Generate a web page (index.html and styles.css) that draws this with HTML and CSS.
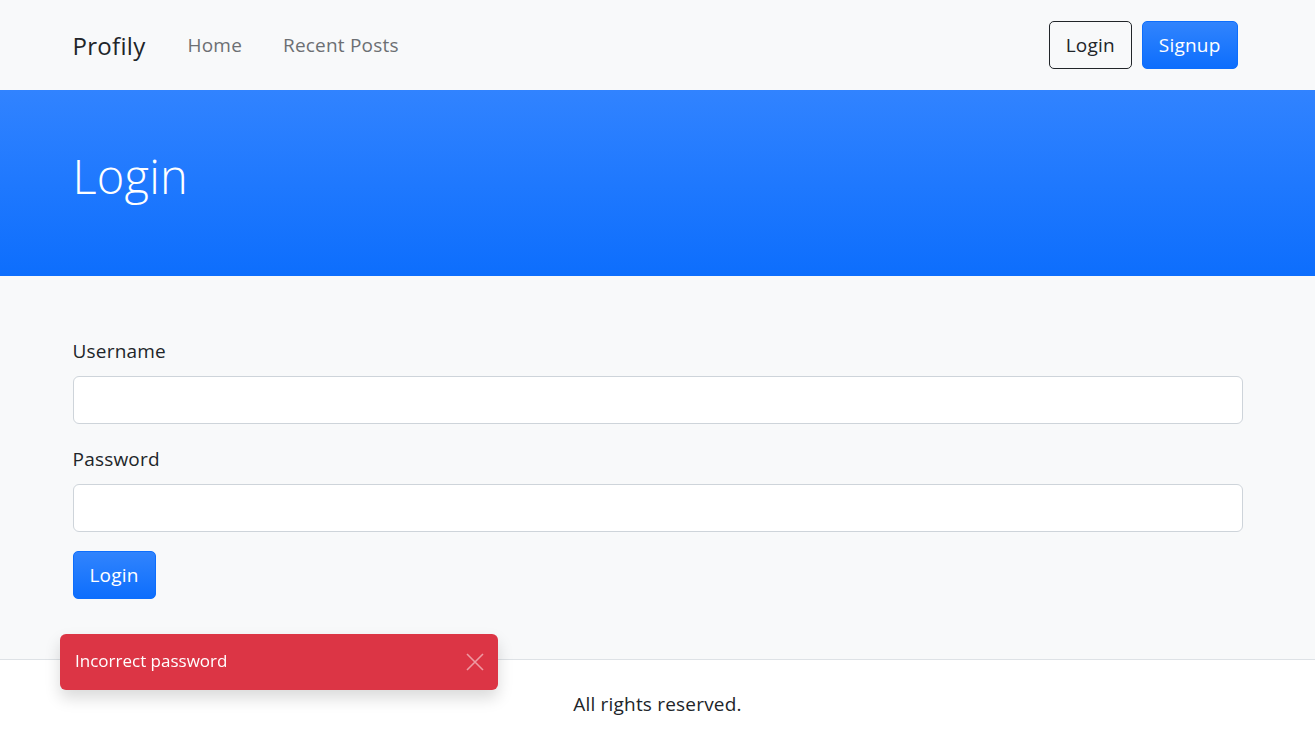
FILE: index.html
```html
<!DOCTYPE html>
<html lang="en">
<head>
<meta charset="utf-8">
<title>Profily - Login</title>
<link rel="stylesheet" href="styles.css">
</head>
<body>
<nav class="navbar">
  <div class="container nav-inner">
    <a class="brand" href="#">Profily</a>
    <ul class="nav-links">
      <li><a href="#">Home</a></li>
      <li><a href="#">Recent Posts</a></li>
    </ul>
    <div class="nav-actions">
      <a class="btn btn-outline" href="#">Login</a>
      <a class="btn btn-primary" href="#">Signup</a>
    </div>
  </div>
</nav>
<header class="hero">
  <div class="container">
    <h1 class="hero-title">Login</h1>
  </div>
</header>
<main class="main">
  <div class="container">
    <form class="form">
      <div class="field">
        <label class="label" for="username">Username</label>
        <input class="input" id="username" type="text">
      </div>
      <div class="field">
        <label class="label" for="password">Password</label>
        <input class="input" id="password" type="password">
      </div>
      <button class="btn btn-primary" type="button">Login</button>
    </form>
  </div>
</main>
<footer class="footer">
  <p>All rights reserved.</p>
</footer>
<div class="toast">
  <span class="toast-text">Incorrect password</span>
  <svg class="toast-close" width="18" height="18" viewBox="0 0 18 18" aria-hidden="true">
    <path d="M1 1 L17 17 M17 1 L1 17" stroke="currentColor" stroke-width="1.6" fill="none"/>
  </svg>
</div>
</body>
</html>
```
FILE: styles.css
```css
* { box-sizing: border-box; }
html, body { margin: 0; padding: 0; }
body {
  font-family: "Open Sans", "Noto Sans", sans-serif;
  font-size: 19px;
  letter-spacing: 0.2px;
  color: #212529;
  background: #f8f9fa;
}
a { text-decoration: none; }
.container {
  max-width: 1200px;
  margin: 0 auto;
  padding: 0 15px;
}
.navbar {
  background: #f8f9fa;
  height: 90px;
  display: flex;
  align-items: center;
}
.nav-inner {
  width: 100%;
  display: flex;
  align-items: center;
}
.brand {
  font-size: 24px;
  letter-spacing: 0.3px;
  color: #212529;
  margin-right: 42px;
}
.nav-links {
  list-style: none;
  margin: 0;
  padding: 0;
  display: flex;
  gap: 41px;
  flex: 1;
}
.nav-links a {
  color: #6c6f73;
  font-size: 19px;
}
.nav-actions {
  display: flex;
  gap: 10px;
  margin-right: 5px;
}
.btn {
  display: inline-flex;
  align-items: center;
  justify-content: center;
  height: 48px;
  padding: 0 16px;
  border-radius: 5px;
  font-family: inherit;
  font-size: 19px;
  letter-spacing: 0.2px;
  border: 1px solid transparent;
  cursor: pointer;
}
.btn-outline {
  border-color: #212529;
  color: #212529;
  background: transparent;
}
.btn-primary {
  color: #fff;
  background: linear-gradient(180deg, #3184fd 0%, #0d6efd 100%);
  border-color: #0d6efd;
}
.hero {
  height: 186px;
  background: linear-gradient(180deg, #3183ff 0%, #0d6efd 100%);
  display: flex;
  align-items: center;
  padding-bottom: 14px;
}
.hero .container { width: 100%; }
.hero-title {
  margin: 0;
  color: #fff;
  font-weight: 300;
  font-size: 47px;
  letter-spacing: 0.2px;
  line-height: 1.2;
}
.main {
  padding: 61px 0 0;
  height: 383px;
}
.form {
  display: flex;
  flex-direction: column;
  align-items: flex-start;
  gap: 19px;
}
.field {
  width: 100%;
  display: flex;
  flex-direction: column;
  gap: 11px;
}
.field + .field { margin-top: 2px; }
.label {
  line-height: 28px;
}
.input {
  width: 100%;
  height: 48px;
  border: 1px solid #ced4da;
  border-radius: 6px;
  background: #fff;
  font-size: 18px;
  padding: 0 12px;
}
.footer {
  background: #fff;
  border-top: 1px solid #dee2e6;
  height: 91px;
  text-align: center;
}
.footer p {
  margin: 0;
  padding-top: 31px;
}
.toast {
  position: fixed;
  left: 60px;
  top: 634px;
  width: 438px;
  height: 56px;
  background: #dc3545;
  border-radius: 6px;
  box-shadow: 0 8px 16px rgba(0,0,0,0.15);
  display: flex;
  align-items: center;
  justify-content: space-between;
  padding: 0 14px 0 15px;
  color: #fff;
}
.toast-text { font-size: 17px; letter-spacing: 0; margin-top: -3px; }
.toast-close {
  color: rgba(255,255,255,0.5);
  width: 18px;
  height: 18px;
}
```
